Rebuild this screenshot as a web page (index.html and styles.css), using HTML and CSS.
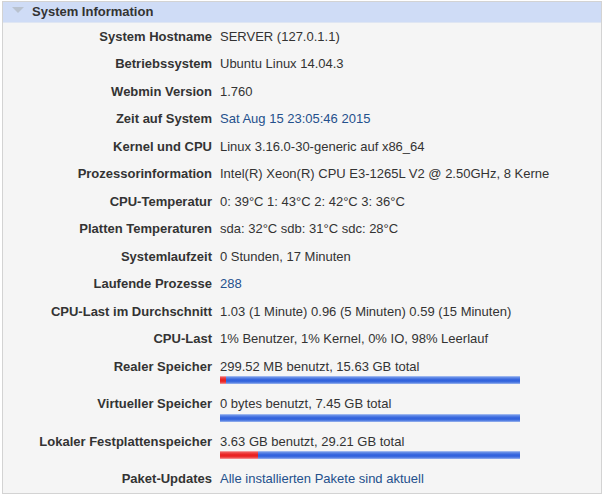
FILE: index.html
```html
<!DOCTYPE html>
<html>
<head>
<meta charset="utf-8">
<link rel="stylesheet" href="styles.css">
</head>
<body>
<div class="panel">
  <div class="panel-head">
    <svg class="tri" width="12" height="7" viewBox="0 0 12 7"><polygon points="0,0 12,0 6,6" fill="#b9c2cf"/></svg>
    <span>System Information</span>
  </div>
  <div class="rows">
    <div class="row"><div class="lbl">System Hostname</div><div class="val">SERVER (127.0.1.1)</div></div>
    <div class="row"><div class="lbl">Betriebssystem</div><div class="val">Ubuntu Linux 14.04.3</div></div>
    <div class="row"><div class="lbl">Webmin Version</div><div class="val">1.760</div></div>
    <div class="row"><div class="lbl">Zeit auf System</div><div class="val link">Sat Aug 15 23:05:46 2015</div></div>
    <div class="row"><div class="lbl">Kernel und CPU</div><div class="val">Linux 3.16.0-30-generic auf x86_64</div></div>
    <div class="row"><div class="lbl">Prozessorinformation</div><div class="val">Intel(R) Xeon(R) CPU E3-1265L V2 @ 2.50GHz, 8 Kerne</div></div>
    <div class="row"><div class="lbl">CPU-Temperatur</div><div class="val">0: 39°C 1: 43°C 2: 42°C 3: 36°C</div></div>
    <div class="row"><div class="lbl">Platten Temperaturen</div><div class="val">sda: 32°C sdb: 31°C sdc: 28°C</div></div>
    <div class="row"><div class="lbl">Systemlaufzeit</div><div class="val">0 Stunden, 17 Minuten</div></div>
    <div class="row"><div class="lbl">Laufende Prozesse</div><div class="val link">288</div></div>
    <div class="row"><div class="lbl">CPU-Last im Durchschnitt</div><div class="val">1.03 (1 Minute) 0.96 (5 Minuten) 0.59 (15 Minuten)</div></div>
    <div class="row"><div class="lbl">CPU-Last</div><div class="val">1% Benutzer, 1% Kernel, 0% IO, 98% Leerlauf</div></div>
    <div class="row"><div class="lbl">Realer Speicher</div><div class="val">299.52 MB benutzt, 15.63 GB total<div class="bar"><div class="used" style="width:6px"></div></div></div></div>
    <div class="row"><div class="lbl">Virtueller Speicher</div><div class="val">0 bytes benutzt, 7.45 GB total<div class="bar"><div class="used" style="width:0px"></div></div></div></div>
    <div class="row"><div class="lbl">Lokaler Festplattenspeicher</div><div class="val">3.63 GB benutzt, 29.21 GB total<div class="bar"><div class="used" style="width:38px"></div></div></div></div>
    <div class="row"><div class="lbl">Paket-Updates</div><div class="val link">Alle installierten Pakete sind aktuell</div></div>
  </div>
</div>
</body>
</html>
```
FILE: styles.css
```css
html, body {
  margin: 0;
  padding: 0;
  background: #ffffff;
}
body {
  padding: 1px 2px 0 2px;
  font-family: "Liberation Sans", Arial, sans-serif;
  font-size: 13px;
  color: #333333;
}
.panel {
  width: 600px;
  height: 493px;
  border: 1px solid #d3d3d3;
  background: #f5f5f5;
  box-sizing: border-box;
  display: flex;
  flex-direction: column;
}
.panel-head {
  height: 20px;
  background: #cfdcf6;
  display: flex;
  align-items: center;
  padding-left: 9px;
  font-weight: bold;
  color: #333333;
  border-bottom: 1px solid #dfe6f3;
}
.tri {
  margin-right: 8px;
  margin-top: -2px;
}
.rows {
  display: flex;
  flex-direction: column;
  padding-top: 0.5px;
}
.row {
  display: grid;
  grid-template-columns: 209px 1fr;
  column-gap: 8px;
  padding: 6.5px 0 6.5px 0;
  line-height: 14.5px;
}
.lbl {
  font-weight: bold;
  text-align: right;
  color: #333333;
}
.val {
  color: #333333;
  white-space: nowrap;
}
.link {
  color: #24508c;
}
.bar {
  margin-top: 2px;
  width: 300px;
  height: 8px;
  background: linear-gradient(#b4c8f2 0%, #5f88e6 20%, #2f60dc 50%, #3e6ddf 75%, #9db6ee 100%);
  display: flex;
}
.used {
  height: 100%;
  background: linear-gradient(#f7b4b4 0%, #ef4a4a 20%, #e81c1c 50%, #ec3030 75%, #f4a0a0 100%);
}
```
